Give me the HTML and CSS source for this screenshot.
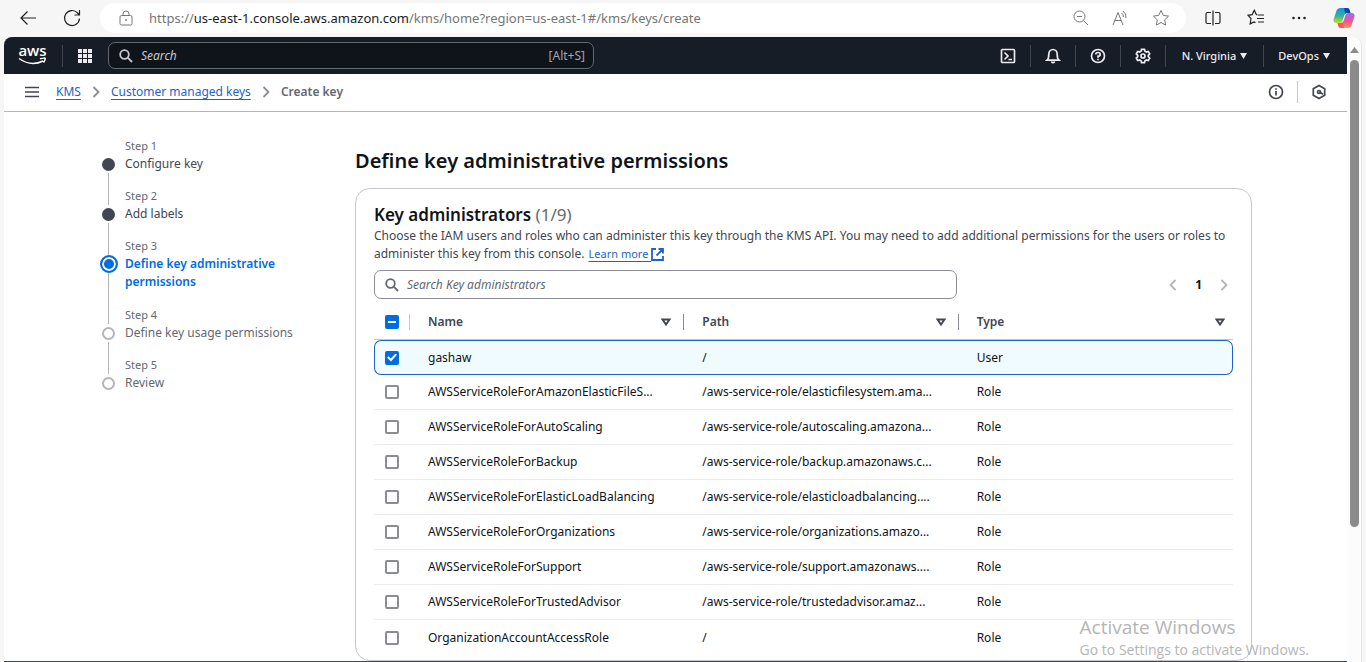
FILE: index.html
```html
<!DOCTYPE html>
<html lang="en">
<head>
<meta charset="utf-8">
<title>Create key | KMS</title>
<link rel="stylesheet" href="styles.css">
</head>
<body>
<div class="browser-bar">
  <button class="bar-btn back" aria-label="Back"><svg width="18" height="18" viewBox="0 0 18 18"><path d="M17 9H2M8.500 2.500L2 9l6.500 6.500"/></svg></button>
  <button class="bar-btn reload" aria-label="Refresh"><svg width="18" height="18" viewBox="0 0 18 18"><path d="M16.500 9.500A7.500 7.500 0 1 1 14.600 4L16 5.500M16.500 1v5h-5"/></svg></button>
  <div class="address">
    <svg class="thin" width="14" height="16" viewBox="0 0 14 16"><rect x="1" y="5.500" width="12" height="9.500" rx="1.500"/><path d="M4 5.500V4a3 3 0 0 1 6 0v1.500"/><circle cx="7" cy="10" r=".6"/></svg>
    <span class="url">https://<b>us-east-1.console.aws.amazon.com</b>/kms/home?region=us-east-1#/kms/keys/create</span>
    <button class="bar-btn thin" aria-label="Zoom"><svg width="16" height="16" viewBox="0 0 16 16"><circle cx="6.500" cy="6.500" r="5.500"/><path d="M10.500 10.500L15 15M4 6.500h5"/></svg></button>
    <button class="bar-btn thin" aria-label="Read aloud"><svg width="17" height="16" viewBox="0 0 17 16"><path d="M1 15L6 2.500 11 15M2.800 10.500h6.400M9.500 3q2 1.500 2 4M11 1q3.500 2.500 3 7"/></svg></button>
    <button class="bar-btn thin" aria-label="Add to favorites"><svg width="18" height="18" viewBox="0 0 18 18"><path d="M9 1.500l2.300 4.900 5.200.7-3.800 3.700 1 5.300L9 13.500l-4.700 2.600 1-5.300L1.500 7.100l5.200-.7z"/></svg></button>
  </div>
  <div class="bar-tools">
    <button class="bar-btn" aria-label="Split screen"><svg width="16" height="16" viewBox="0 0 16 16"><path d="M6 2.500H2.500Q1 2.500 1 4v8q0 1.500 1.500 1.500H6M10 2.500h3.500Q15 2.500 15 4v8q0 1.500-1.500 1.500H10M8 .5v15"/></svg></button>
    <button class="bar-btn" aria-label="Favorites"><svg width="18" height="17" viewBox="0 0 18 17"><path d="M10.500 6L9.300 5.600 7.300 1.300 5.200 5.600 1 6.300l3 3.200-.8 5.400 3.800-2 1.500.7M11 6h6M10 9.500h7M11 13h6"/></svg></button>
    <button class="bar-btn" aria-label="Settings and more"><svg width="16" height="16" viewBox="0 0 16 16"><g fill="#222" stroke="none"><circle cx="2.500" cy="8" r="1.300"/><circle cx="8" cy="8" r="1.300"/><circle cx="13.500" cy="8" r="1.300"/></g></svg></button>
    <button class="bar-btn" aria-label="Copilot"><svg width="22" height="22" viewBox="0 0 22 22"><defs><linearGradient id="ca" x1="0" y1="0" x2="0" y2="1"><stop offset="0" stop-color="#1b8fe0"/><stop offset=".5" stop-color="#27b5a0"/><stop offset="1" stop-color="#d9d22c"/></linearGradient><linearGradient id="cb" x1="0" y1="0" x2="0" y2="1"><stop offset="0" stop-color="#a668ee"/><stop offset=".55" stop-color="#e75794"/><stop offset="1" stop-color="#ff9653"/></linearGradient></defs><g stroke="none"><path d="M7 1h7q2 0 2.700 2.200L17.500 6H14q-2 0-2.700 2.200L9.500 14q-.7 2-2.600 2H3.300Q-.2 16 .7 12L3.500 3.500Q4.400 1 7 1z" fill="url(#ca)"/><path d="M11 1h3.500q1.500 0 2.200 2.200L17.500 6H14q-1 0-1.800.8z" fill="#1446a0"/><path d="M15 21H8q-2 0-2.700-2.200L4.500 16H8q2 0 2.700-2.200L12.500 8q.7-2 2.600-2h3.600q3.500 0 2.600 4l-2.800 8.500Q17.600 21 15 21z" fill="url(#cb)"/><path d="M11 21H7.500Q6 21 5.300 18.800L4.500 16H8q1 0 1.800-.8z" fill="#f25b57"/></g></svg></button>
  </div>
</div>
<div class="window">
  <div class="page">
    <header class="topnav">
      <a class="logo" href="#" aria-label="AWS home"><span>aws</span><svg width="29" height="8" viewBox="0 0 29 8"><path d="M1 1.500Q13 10 25 4M22 1.800q5-1.200 5.200-.3T25.500 5.500"/></svg></a>
      <i class="rule"></i>
      <button class="icon-btn apps" aria-label="Services"><svg width="14" height="14" viewBox="0 0 14 14"><path d="M0 0h4v4H0zM5 0h4v4H5zM10 0h4v4h-4zM0 5h4v4H0zM5 5h4v4H5zM10 5h4v4h-4zM0 10h4v4H0zM5 10h4v4H5zM10 10h4v4h-4z"/></svg></button>
      <label class="nav-search"><svg width="14" height="14" viewBox="0 0 14 14"><circle cx="5.500" cy="5.500" r="4.300"/><path d="M8.700 8.700L13 13"/></svg><input type="search" placeholder="Search" aria-label="Search"><span>[Alt+S]</span></label>
      <nav class="nav-tools">
        <button class="icon-btn" aria-label="CloudShell"><svg width="16" height="16" viewBox="0 0 16 16"><rect x="1.500" y="1.500" width="13" height="13" rx="1"/><path d="M4.500 4.500L8 8l-3.500 3.500M8.500 11.500H12"/></svg></button><i class="rule"></i>
        <button class="icon-btn" aria-label="Notifications"><svg width="16" height="16" viewBox="0 0 16 16"><path d="M2 12.200q1.800-1.500 1.800-6A4.200 4.700 0 0 1 12.200 6.200q0 4.500 1.800 6zM6.300 13.500q1.700 2.400 3.400 0"/></svg></button><i class="rule"></i>
        <button class="icon-btn" aria-label="Help"><svg width="16" height="16" viewBox="0 0 16 16"><circle cx="8" cy="8" r="6.500"/><path d="M5.800 6.500q0-2 2.200-2t2.200 1.900Q10.200 8 8 8.200v1.500M8 10.800v1.400"/></svg></button><i class="rule"></i>
        <button class="icon-btn" aria-label="Settings"><svg width="16" height="16" viewBox="0 0 16 16"><path d="M6.500 1.300h3l.5 2 1.300.7 2-.6 1.400 2.500L13.300 7.300v1.400l1.400 1.400-1.400 2.500-2-.6-1.300.7-.5 2h-3l-.5-2-1.300-.7-2 .6-1.400-2.500 1.400-1.400V7.300L1.300 5.900l1.400-2.500 2 .6L6 3.300z"/><circle cx="8" cy="8" r="2"/></svg></button><i class="rule"></i>
        <button class="text-btn region">N. Virginia<svg width="7" height="7" viewBox="0 0 7 7"><path d="M0 1h7L3.500 7z"/></svg></button><i class="rule"></i>
        <button class="text-btn">DevOps<svg width="7" height="7" viewBox="0 0 7 7"><path d="M0 1h7L3.500 7z"/></svg></button>
      </nav>
    </header>
    <div class="crumbs">
      <button class="icon-btn dark" aria-label="Open menu"><svg width="14" height="12" viewBox="0 0 14 12"><path d="M0 1.500h14M0 6h14M0 10.500h14"/></svg></button>
      <nav class="trail" aria-label="Breadcrumbs">
        <a href="#">KMS</a><svg width="8" height="12" viewBox="0 0 8 12"><path d="M1.500 1L6.500 6l-5 5"/></svg><a href="#">Customer managed keys</a><svg width="8" height="12" viewBox="0 0 8 12"><path d="M1.500 1L6.500 6l-5 5"/></svg><strong>Create key</strong>
      </nav>
      <button class="icon-btn dark" aria-label="Info"><svg width="16" height="16" viewBox="0 0 16 16"><circle cx="8" cy="8" r="6.500"/><path d="M8 7v4.500M8 4.200v1.500"/></svg></button>
      <i class="rule light"></i>
      <button class="icon-btn dark" aria-label="Amazon Q"><svg width="16" height="16" viewBox="0 0 16 16"><path d="M8 1.500l5.700 3.200v6.600L8 14.500l-5.700-3.200V4.700zM8.500 8l3.500 2.300"/><circle cx="8" cy="8" r="1.500"/></svg></button>
    </div>
    <div class="content">
      <ol class="steps">
        <li class="done"><div class="track"><i></i><b></b><i></i></div><div class="step"><small>Step 1</small><a href="#">Configure key</a></div></li>
        <li class="done"><div class="track"><i></i><b></b><i></i></div><div class="step"><small>Step 2</small><a href="#">Add labels</a></div></li>
        <li class="active"><div class="track"><i></i><b></b><i></i></div><div class="step"><small>Step 3</small><span>Define key administrative permissions</span></div></li>
        <li><div class="track"><i></i><b></b><i></i></div><div class="step"><small>Step 4</small><span>Define key usage permissions</span></div></li>
        <li><div class="track"><i></i><b></b><i></i></div><div class="step"><small>Step 5</small><span>Review</span></div></li>
      </ol>
      <main>
        <h1>Define key administrative permissions</h1>
        <section class="card">
          <h2>Key administrators <span>(1/9)</span></h2>
          <p>Choose the IAM users and roles who can administer this key through the KMS API. You may need to add additional permissions for the users or roles to administer this key from this console. <a href="#">Learn more <svg width="13" height="13" viewBox="0 0 13 13"><path d="M5 1H1v11h11V8M7.500 1H12v4.500M12 1L5.500 7.500"/></svg></a></p>
          <div class="filters">
            <label class="filter"><svg width="14" height="14" viewBox="0 0 14 14"><circle cx="5.500" cy="5.500" r="4.300"/><path d="M8.700 8.700L13 13"/></svg><input type="search" placeholder="Search Key administrators" aria-label="Search Key administrators"></label>
            <div class="pager"><button aria-label="Previous page"><svg width="8" height="12" viewBox="0 0 8 12"><path d="M6.500 1L1.500 6l5 5"/></svg></button><button class="current">1</button><button aria-label="Next page"><svg width="8" height="12" viewBox="0 0 8 12"><path d="M1.500 1L6.500 6l-5 5"/></svg></button></div>
          </div>
          <table>
            <colgroup><col class="c-check"><col><col><col></colgroup>
            <thead><tr>
              <th><div class="head"><input type="checkbox" class="mixed" aria-label="Select all"></div></th>
              <th><div class="head">Name<svg width="10" height="8" viewBox="0 0 10 8"><path d="M1.500 1.500h7L5 6.500z"/></svg></div></th>
              <th><div class="head">Path<svg width="10" height="8" viewBox="0 0 10 8"><path d="M1.500 1.500h7L5 6.500z"/></svg></div></th>
              <th><div class="head">Type<svg width="10" height="8" viewBox="0 0 10 8"><path d="M1.500 1.500h7L5 6.500z"/></svg></div></th>
            </tr></thead>
            <tbody>
              <tr class="selected"><td><input type="checkbox" checked aria-label="gashaw"></td><td>gashaw</td><td>/</td><td>User</td></tr>
              <tr><td><input type="checkbox" aria-label="AmazonElasticFileSystem"></td><td>AWSServiceRoleForAmazonElasticFileS...</td><td>/aws-service-role/elasticfilesystem.ama...</td><td>Role</td></tr>
              <tr><td><input type="checkbox" aria-label="AutoScaling"></td><td>AWSServiceRoleForAutoScaling</td><td>/aws-service-role/autoscaling.amazona...</td><td>Role</td></tr>
              <tr><td><input type="checkbox" aria-label="Backup"></td><td>AWSServiceRoleForBackup</td><td>/aws-service-role/backup.amazonaws.c...</td><td>Role</td></tr>
              <tr><td><input type="checkbox" aria-label="ElasticLoadBalancing"></td><td>AWSServiceRoleForElasticLoadBalancing</td><td>/aws-service-role/elasticloadbalancing....</td><td>Role</td></tr>
              <tr><td><input type="checkbox" aria-label="Organizations"></td><td>AWSServiceRoleForOrganizations</td><td>/aws-service-role/organizations.amazo...</td><td>Role</td></tr>
              <tr><td><input type="checkbox" aria-label="Support"></td><td>AWSServiceRoleForSupport</td><td>/aws-service-role/support.amazonaws....</td><td>Role</td></tr>
              <tr><td><input type="checkbox" aria-label="TrustedAdvisor"></td><td>AWSServiceRoleForTrustedAdvisor</td><td>/aws-service-role/trustedadvisor.amaz...</td><td>Role</td></tr>
              <tr><td><input type="checkbox" aria-label="OrganizationAccountAccessRole"></td><td>OrganizationAccountAccessRole</td><td>/</td><td>Role</td></tr>
            </tbody>
          </table>
        </section>
      </main>
    </div>
    <div class="page-footer"></div>
  </div>
  <div class="scrollbar"><svg width="9" height="6" viewBox="0 0 9 6"><path d="M4.500 0L9 6H0z"/></svg><div class="thumb"></div></div>
</div>
<div class="watermark"><div class="wm-title">Activate Windows</div><div>Go to Settings to activate Windows.</div></div>
</body>
</html>
```
FILE: styles.css
```css
* { box-sizing: border-box; }
body {
  margin: 0;
  height: 100vh;
  display: flex;
  flex-direction: column;
  overflow: hidden;
  background: #f6f6f6;
  color: #0f141a;
  font: 12px/18px "Noto Sans", sans-serif;
}
button {
  display: flex;
  align-items: center;
  justify-content: center;
  padding: 0;
  border: 0;
  background: none;
  color: inherit;
  font: inherit;
}
svg { flex: none; fill: none; stroke: currentColor; }
a { color: #1f63c8; text-underline-offset: 3px; }

.browser-bar { flex: none; display: flex; align-items: center; height: 37px; padding: 0 11px 2px 19px; }
.browser-bar svg { stroke: #222; stroke-width: 1.2; }
.browser-bar .thin, .browser-bar .thin svg { stroke: #777; stroke-width: 1; }
.reload { margin-left: 26px; }
.address {
  flex: 1;
  display: flex;
  align-items: center;
  gap: 23px;
  height: 30px;
  margin-left: 19px;
  padding: 0 16px 0 19px;
  border-radius: 15px;
  background: #fff;
}
.url { flex: 1; margin-left: -7px; font-size: 13px; color: #767676; white-space: nowrap; }
.url b { font-weight: 400; color: #1b1b1b; }
.bar-tools { display: flex; align-items: center; gap: 26px; margin-left: 19px; }

.window { flex: 1; min-height: 0; display: flex; padding: 0 4px; }
.page {
  flex: 1;
  display: flex;
  flex-direction: column;
  overflow: hidden;
  border-top-left-radius: 8px;
  background: #fff;
}
.topnav {
  flex: none;
  display: flex;
  align-items: center;
  height: 37px;
  padding: 0 17px 0 14px;
  background: #161d26;
  color: #ebebf0;
}
.logo { display: flex; flex-direction: column; align-items: center; width: 29px; padding-bottom: 2px; color: #fff; text-decoration: none; font: 600 15px/13px "Open Sans", sans-serif; }
.logo svg { stroke-width: 1.5; }
.rule { width: 1px; height: 22px; background: #424650; }
.rule.light { background: #c6c6cd; margin: 0 13px; }
.logo + .rule { margin-left: 15px; }
.icon-btn svg { stroke-width: 1.7; }
.icon-btn.apps { margin: 0 16px 0 15px; }
.apps svg { fill: currentColor; stroke: none; }
.icon-btn.dark { color: #424650; }
.nav-search {
  display: flex;
  align-items: center;
  gap: 8px;
  flex: 0 1 486px;
  height: 27px;
  padding: 0 8px 0 10px;
  border: 1px solid #656871;
  border-radius: 7px;
  background: #0f141a;
  color: #c6c6cd;
}
.nav-search svg, .filter svg { stroke-width: 1.8; }
input[type="search"] { flex: 1; min-width: 0; padding: 0; border: 0; outline: 0; background: none; color: inherit; font: inherit; }
input::placeholder { color: inherit; opacity: 1; font-style: italic; }
.nav-search span { color: #a4a4ad; }
.nav-tools { display: flex; align-items: center; gap: 14px; margin-left: auto; }
.text-btn { gap: 4px; font-size: 11px; font-weight: 500; }
.text-btn svg { fill: currentColor; stroke: none; }
.region { margin: 0 2px; }

.crumbs {
  flex: none;
  display: flex;
  align-items: center;
  height: 38px;
  padding: 0 20px 2px 21px;
  border-bottom: 1px solid #b4b4bb;
}
.trail { flex: 1; display: flex; align-items: center; gap: 11px; margin-left: 17px; }
.trail svg { stroke: #8c8c94; stroke-width: 1.8; }
.trail strong { color: #656871; font-weight: 600; }

.content {
  flex: 1;
  min-height: 0;
  display: grid;
  grid-template-columns: 219px minmax(0, 1fr);
  column-gap: 36px;
  padding: 24px 95px 0 96px;
}
.steps { margin: 0; padding: 0; list-style: none; color: #656871; }
.steps li { display: grid; grid-template-columns: 17px 1fr; column-gap: 8px; }
.track { display: flex; flex-direction: column; align-items: center; }
.track i { width: 1px; background: #b4b4bb; }
.track i:first-child { height: 19px; }
.track i:last-child { flex: 1; }
.steps li:first-child i:first-child, .steps li:last-child i:last-child { background: none; }
.track b { width: 13px; height: 13px; margin: 3px 0 2px; border: 2px solid #b4b4bb; border-radius: 50%; background: #fff; }
.step { padding-bottom: 13px; }
.step small { display: block; font-size: 11px; line-height: 19px; }
.step a { color: #424650; text-decoration: none; }
.done b { border-color: #424650; background: #424650; }
.active .track b { width: 18px; height: 18px; margin: 0; border-color: #006ce0; background: #006ce0; box-shadow: inset 0 0 0 2px #fff; }
.active .step { width: 180px; padding-bottom: 14px; }
.active span { color: #006ce0; font-weight: 600; }

h1 { margin: 12px 0 14px; font-size: 20px; line-height: 26px; font-weight: 600; }
.card { padding: 14px 18px 5px; border: 1px solid #c6c6cd; border-radius: 15px; }
h2 { margin: 0; font-size: 17px; line-height: 24px; font-weight: 600; }
h2 span { color: #656871; font-weight: 400; }
.card p { margin: 0; color: #424650; }
.card p a { margin-left: 1px; font-size: 11px; }
.card p svg { vertical-align: -3px; stroke-width: 1.8; }
.filters { display: flex; align-items: center; margin-top: 7px; }
.filter {
  display: flex;
  align-items: center;
  gap: 8px;
  flex: 0 1 583px;
  height: 29px;
  padding: 0 10px;
  border: 1px solid #8c8c94;
  border-radius: 7px;
  color: #656871;
}
.pager { display: flex; align-items: center; gap: 18px; margin-left: auto; padding-right: 5px; }
.pager svg { stroke: #b4b4bb; stroke-width: 1.8; }
.pager .current { font-weight: 700; }

table { width: 100%; table-layout: fixed; border-collapse: separate; border-spacing: 0; margin-top: 5px; }
.c-check { width: 36px; }
th, td { height: 35px; padding: 0 18px; text-align: left; white-space: nowrap; }
td:first-child, th:first-child { padding: 0 0 0 11px; }
td { border-bottom: 1px solid #ebebf0; }
tr:last-child td { border-bottom: 0; }
th { height: 36px; padding: 0; border-bottom: 1px solid #c6c6cd; color: #424650; font-weight: 600; }
.head { display: flex; align-items: center; justify-content: space-between; height: 16px; padding: 0 12px 0 18px; border-right: 1px solid #8c8c94; }
th:first-child .head { padding: 0; border-color: #c6c6cd; }
th:last-child .head { padding-right: 8px; border: 0; }
.head svg { stroke-width: 2; }
.selected td { border-top: 1px solid #1f63c8; border-bottom: 1px solid #1f63c8; background: #f0fbff; }
.selected td:first-child { border-left: 1px solid #1f63c8; border-radius: 7px 0 0 7px; padding-left: 10px; }
.selected td:last-child { border-right: 1px solid #1f63c8; border-radius: 0 7px 7px 0; }
input[type="checkbox"] {
  display: flex;
  align-items: center;
  justify-content: center;
  appearance: none;
  width: 14px;
  height: 14px;
  margin: 0;
  border: 2px solid #8c8c94;
  border-radius: 2px;
  background: #fff;
}
input[type="checkbox"]:checked, input[type="checkbox"].mixed { border-color: #006ce0; background: #006ce0; }
input:checked::before { content: ""; width: 10px; height: 8px; background: #fff; clip-path: polygon(0 50%, 15% 35%, 38% 62%, 85% 0, 100% 15%, 40% 100%); }
input.mixed::before { content: ""; width: 8px; height: 2px; background: #fff; }

.page-footer { flex: none; height: 1px; background: #424650; }
.scrollbar { flex: none; display: flex; flex-direction: column; align-items: center; gap: 7px; width: 15px; padding-top: 10px; border-right: 1px solid #e6e6e6; border-top-right-radius: 8px; background: #fcfcfc; }
.scrollbar svg { fill: #8b8b8b; stroke: none; }
.thumb { width: 9px; height: 76%; border-radius: 5px; background: #8b8b8b; }
.watermark { position: absolute; right: 57px; bottom: 2px; color: #b5b5b5; font: 14px/20px "Open Sans", sans-serif; }
.wm-title { font-size: 19px; line-height: 26px; }
```
